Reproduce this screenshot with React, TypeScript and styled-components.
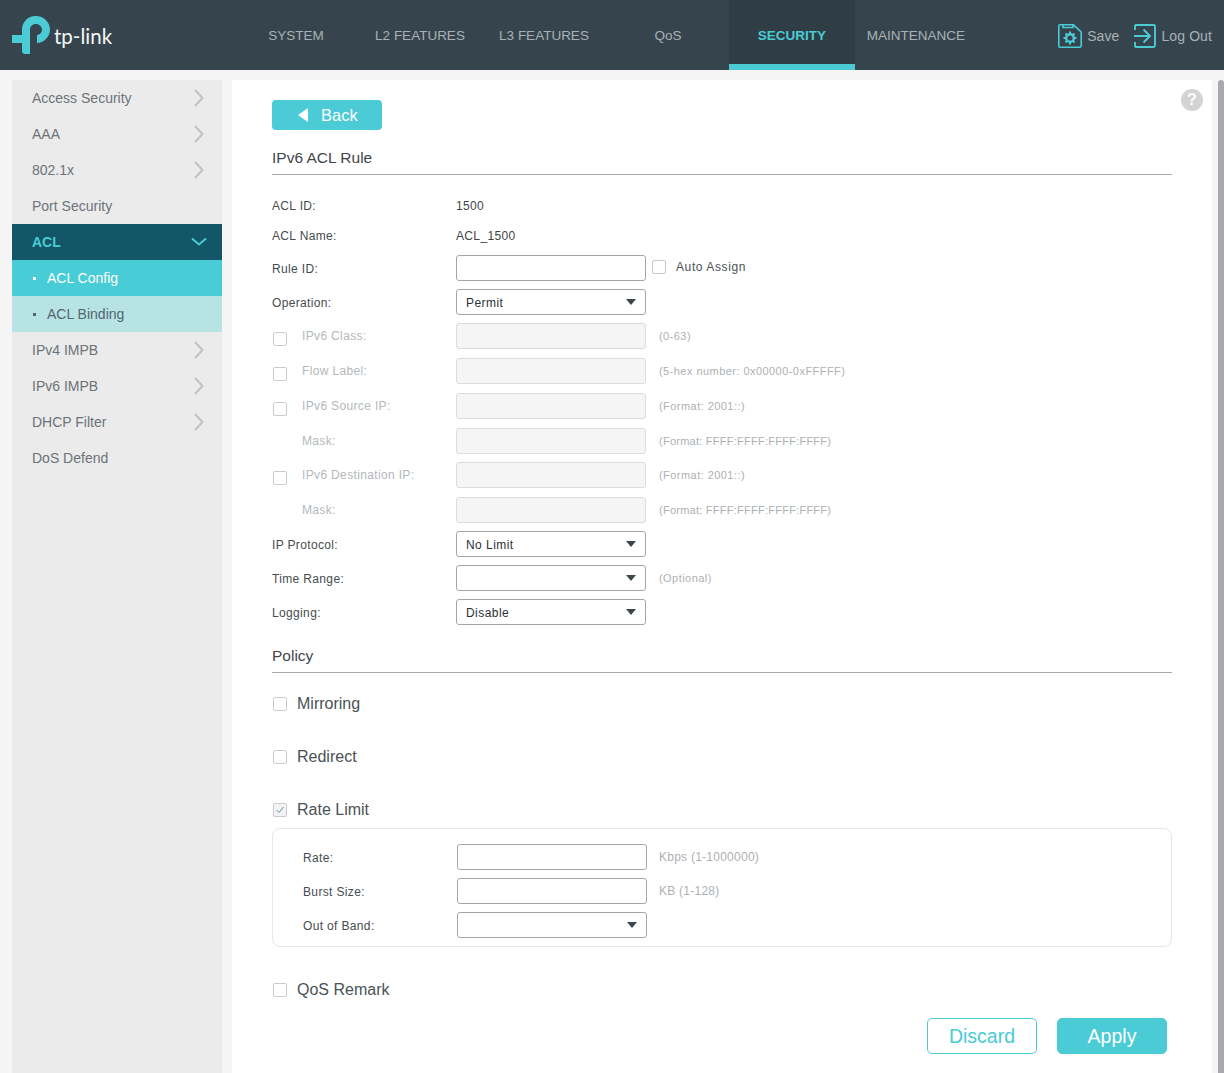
import React from "react";
import styled, { createGlobalStyle } from "styled-components";

const CYAN = "#4acbd6";

const GlobalStyle = createGlobalStyle`
  html, body {
    margin: 0;
    padding: 0;
    height: 1073px;
    overflow: hidden;
    background: #f5f5f5;
    font-family: "Liberation Sans", Arial, sans-serif;
  }
`;

const Page = styled.div`
  width: 1224px;
  height: 1073px;
  display: flex;
  flex-direction: column;
  overflow: hidden;
`;

const TopBar = styled.header`
  height: 70px;
  flex: none;
  background: #36454d;
  display: flex;
  align-items: stretch;
`;

const LogoBox = styled.div`
  width: 234px;
  flex: none;
  padding: 16px 0 0 12px;
  display: flex;
  align-items: flex-start;
  box-sizing: border-box;
`;

const LogoText = styled.span`
  font-family: "Lato", sans-serif;
  font-size: 20.5px;
  font-weight: 400;
  color: #f4f6f6;
  margin: 7px 0 0 4px;
  line-height: 26px;
`;

const NavItem = styled.div<{ $active?: boolean }>`
  width: ${(p) => (p.$active ? 126 : 124)}px;
  margin: ${(p) => (p.$active ? "0 -1px" : "0")};
  flex: none;
  box-sizing: border-box;
  display: flex;
  align-items: center;
  justify-content: center;
  font-size: 13.5px;
  color: ${(p) => (p.$active ? CYAN : "#a8b1b5")};
  font-weight: ${(p) => (p.$active ? 700 : 400)};
  background: ${(p) => (p.$active ? "#2f3e44" : "transparent")};
  box-shadow: ${(p) => (p.$active ? `inset 0 -6px 0 ${CYAN}` : "none")};
`;

const TopActions = styled.div`
  margin-left: auto;
  padding: 24px 12px 0 0;
  display: flex;
  align-items: flex-start;
`;

const TopAction = styled.span<{ $gap: number }>`
  color: #a8b1b5;
  font-size: 14px;
  letter-spacing: 0.1px;
  line-height: 24px;
  margin-left: 5px;
  margin-right: ${(p) => p.$gap}px;
`;

const Body = styled.div`
  flex: 1;
  display: flex;
  padding: 10px 0 0 12px;
  min-height: 0;
`;

const Sidebar = styled.nav`
  width: 210px;
  flex: none;
  background: #ebebeb;
  margin-right: 10px;
`;

const MenuRow = styled.div<{ $kind?: "open" | "current" | "sub" }>`
  height: 36px;
  box-sizing: border-box;
  display: flex;
  align-items: center;
  padding: 0 15px 0 20px;
  justify-content: space-between;
  font-size: 14px;
  font-weight: ${(p) => (p.$kind === "open" ? 700 : 400)};
  color: ${(p) =>
    p.$kind === "open" ? CYAN : p.$kind === "current" ? "#fff" : p.$kind === "sub" ? "#51666e" : "#6c7378"};
  background: ${(p) =>
    p.$kind === "open"
      ? "#125668"
      : p.$kind === "current"
        ? "#48ccd6"
        : p.$kind === "sub"
          ? "#b8e3e5"
          : "transparent"};
`;

const SubLabel = styled.span`
  display: flex;
  align-items: center;
`;

const Bullet = styled.i`
  width: 3px;
  height: 3px;
  margin: 0 11px 0 1px;
  background: currentColor;
`;

const Content = styled.main`
  width: 980px;
  flex: none;
  position: relative;
  background: #fff;
  box-sizing: border-box;
  padding: 20px 40px 0;
`;

const HelpBadge = styled.div`
  position: absolute;
  top: 9px;
  right: 9px;
  width: 22px;
  height: 22px;
  border-radius: 50%;
  background: #d3d3d3;
  color: #fff;
  font-weight: 700;
  font-size: 16px;
  line-height: 22px;
  text-align: center;
`;

const Scrollbar = styled.div`
  width: 6px;
  margin-left: 6px;
  flex: none;
  background: #a9a9ad;
  border-radius: 3px 3px 0 0;
`;

const BackButton = styled.div`
  width: 110px;
  height: 30px;
  border-radius: 4px;
  background: ${CYAN};
  color: #fff;
  font-size: 16.5px;
  display: flex;
  align-items: center;
  padding: 1px 0 0 26px;
  box-sizing: border-box;
`;

const BackArrow = styled.i`
  width: 0;
  height: 0;
  border-style: solid;
  border-width: 7px 10px 7px 0;
  border-color: transparent #fff transparent transparent;
  margin: -1px 13px 0 0;
`;

const SectionTitle = styled.h2<{ $top: number; $bottom: number }>`
  margin: ${(p) => p.$top}px 0 ${(p) => p.$bottom}px;
  height: 33px;
  box-sizing: border-box;
  border-bottom: 1px solid #a6a9ab;
  font-size: 15.5px;
  font-weight: 400;
  line-height: 32px;
  color: #3f474b;
`;

const Row = styled.div<{ $h: number; $mt?: number; $mb?: number }>`
  height: ${(p) => p.$h}px;
  margin-top: ${(p) => p.$mt ?? 0}px;
  margin-bottom: ${(p) => p.$mb ?? 0}px;
  display: flex;
  align-items: center;
`;

const Label = styled.label<{ $w?: number; $muted?: boolean; $pad?: number }>`
  width: ${(p) => p.$w ?? 184}px;
  padding-left: ${(p) => p.$pad ?? 0}px;
  padding-top: ${(p) => (p.$muted ? 0 : 2)}px;
  box-sizing: border-box;
  flex: none;
  font-size: 12px;
  letter-spacing: 0.35px;
  display: flex;
  align-items: center;
  color: ${(p) => (p.$muted ? "#b4b8ba" : "#454c50")};
`;

const Value = styled.span`
  font-size: 12px;
  letter-spacing: 0.35px;
  padding-top: 2px;
  color: #3f4649;
`;

const Input = styled.div<{ $disabled?: boolean }>`
  width: 190px;
  height: 26px;
  flex: none;
  box-sizing: border-box;
  border-radius: 3px;
  border: 1px solid ${(p) => (p.$disabled ? "#dcdcdc" : "#a3a6a8")};
  background: ${(p) => (p.$disabled ? "#f5f5f5" : "#fff")};
`;

const Select = styled(Input)`
  position: relative;
  padding-left: 9px;
  font-size: 12px;
  letter-spacing: 0.45px;
  line-height: 26px;
  color: #2b3135;

  &::after {
    content: "";
    position: absolute;
    right: 9px;
    top: 9px;
    border-style: solid;
    border-width: 6px 5px 0;
    border-color: #3c464c transparent transparent;
  }
`;

const Hint = styled.span<{ $spacing?: number }>`
  margin-left: 13px;
  font-size: 11px;
  letter-spacing: ${(p) => p.$spacing ?? 0.45}px;
  color: #adb1b3;
`;

const PanelHint = styled.span`
  margin-left: 12px;
  font-size: 12px;
  letter-spacing: 0.25px;
  color: #adb1b3;
`;

const Box = styled.i<{ $checked?: boolean; $mr?: number; $ml?: number; $mt?: number }>`
  width: 14px;
  height: 14px;
  flex: none;
  box-sizing: border-box;
  border: 1px solid #c9cbcc;
  border-radius: 2px;
  margin: ${(p) => p.$mt ?? 0}px ${(p) => p.$mr ?? 0}px 0 ${(p) => p.$ml ?? 0}px;
  display: flex;
  align-items: center;
  justify-content: center;
  background: ${(p) => (p.$checked ? "#f3f3f3" : "#fff")};
`;

const PolicyLabel = styled.span`
  font-size: 16px;
  color: #4a5256;
`;

const AutoAssign = styled.span`
  display: flex;
  align-items: center;
  margin: -3px 0 0 6px;
  font-size: 12px;
  letter-spacing: 0.6px;
  color: #4a5256;
`;

const RatePanel = styled.div`
  margin-top: 2px;
  height: 119px;
  box-sizing: border-box;
  border: 1px solid #e6e6e6;
  border-radius: 8px;
  padding: 15px 0 0 30px;
`;

const Footer = styled.div`
  display: flex;
  justify-content: flex-end;
  gap: 20px;
  padding-right: 5px;
  margin-top: 12px;
`;

const ActionButton = styled.div<{ $primary?: boolean }>`
  width: 110px;
  height: 36px;
  box-sizing: border-box;
  border-radius: 5px;
  border: 1px solid ${CYAN};
  background: ${(p) => (p.$primary ? CYAN : "#fff")};
  color: ${(p) => (p.$primary ? "#fff" : CYAN)};
  font-size: 19.5px;
  line-height: 34px;
  text-align: center;
`;

const LogoMark = () => (
  <svg width="38" height="38" viewBox="0 0 38 38">
    <path
      fill={CYAN}
      d="M10 19V13.5C10 6 16 0 23.5 0H24C31.5 0 38 6 38 13.5C38 21 31.5 27 25 27V19C27.5 19 30 16.5 30 13.5C30 10.5 27 8 24 8H23.5C20.5 8 18 10.5 18 13.5V38H13C11 38 10 36.5 10 35V27H0V19Z"
    />
  </svg>
);

const Chevron = ({ open }: { open?: boolean }) => (
  <svg width="16" height="18" viewBox="0 0 16 18" fill="none">
    <path
      d={open ? "M1 5.5L8 11.5L15 5.5" : "M4 1L11.5 9L4 17"}
      stroke={open ? CYAN : "#bfc1c2"}
      strokeWidth="2"
    />
  </svg>
);

const SaveIcon = () => (
  <svg width="24" height="24" viewBox="0 0 24 24" fill="none" stroke={CYAN}>
    <path strokeWidth="1.6" d="M2 0.8H15.5L23.2 8V22C23.2 22.7 22.7 23.2 22 23.2H2C1.3 23.2 0.8 22.7 0.8 22V2C0.8 1.3 1.3 0.8 2 0.8Z" />
    <path strokeWidth="1.6" d="M5 0.8V3.5H15V0.8" />
    <circle cx="12" cy="14" r="3.8" strokeWidth="2.4" />
    <path
      strokeWidth="2"
      d="M12 7.5V10M12 18V20.5M5.5 14H8M16 14H18.5M7.5 9.5L9.2 11.2M14.8 16.8L16.5 18.5M16.5 9.5L14.8 11.2M9.2 16.8L7.500 18.5"
    />
  </svg>
);

const LogoutIcon = () => (
  <svg width="22" height="24" viewBox="0 0 22 24" fill="none" stroke={CYAN} strokeWidth="1.9">
    <path d="M1 6V2C1 1.4 1.4 1 2 1H19.5C20.4 1 21 1.6 21 2.5V21.5C21 22.4 20.4 23 19.5 23H2C1.4 23 1 22.6 1 22V18" />
    <path d="M0 12H15.5M9.5 5.500L16 12L9.5 18.5" />
  </svg>
);

const CheckMark = () => (
  <svg width="10" height="10" viewBox="0 0 10 10" fill="none">
    <path d="M1.5 5L4 7.5L8.5 2" stroke="#5a9aa0" strokeWidth="1" />
  </svg>
);

const sideTop = ["Access Security", "AAA", "802.1x"];
const navItems = ["SYSTEM", "L2 FEATURES", "L3 FEATURES", "QoS", "SECURITY", "MAINTENANCE"];

const DisabledRow = ({
  label,
  hint,
  checkbox,
  mb,
  spacing,
}: {
  label: string;
  hint: string;
  checkbox?: boolean;
  mb: number;
  spacing?: number;
}) => (
  <Row $h={26} $mb={mb}>
    <Label $muted $pad={checkbox ? 0 : 30}>
      {checkbox && <Box $ml={1} $mr={15} $mt={6} />}
      {label}
    </Label>
    <Input $disabled />
    <Hint $spacing={spacing}>{hint}</Hint>
  </Row>
);

export default function App() {
  return (
    <Page>
      <GlobalStyle />
      <TopBar>
        <LogoBox>
          <LogoMark />
          <LogoText>tp-link</LogoText>
        </LogoBox>
        {navItems.map((item) => (
          <NavItem key={item} $active={item === "SECURITY"}>
            {item}
          </NavItem>
        ))}
        <TopActions>
          <SaveIcon />
          <TopAction $gap={15}>Save</TopAction>
          <LogoutIcon />
          <TopAction $gap={0}>Log Out</TopAction>
        </TopActions>
      </TopBar>
      <Body>
        <Sidebar>
          {sideTop.map((item) => (
            <MenuRow key={item}>
              {item}
              <Chevron />
            </MenuRow>
          ))}
          <MenuRow>Port Security</MenuRow>
          <MenuRow $kind="open">
            ACL
            <Chevron open />
          </MenuRow>
          <MenuRow $kind="current">
            <SubLabel>
              <Bullet />
              ACL Config
            </SubLabel>
          </MenuRow>
          <MenuRow $kind="sub">
            <SubLabel>
              <Bullet />
              ACL Binding
            </SubLabel>
          </MenuRow>
          {["IPv4 IMPB", "IPv6 IMPB", "DHCP Filter"].map((item) => (
            <MenuRow key={item}>
              {item}
              <Chevron />
            </MenuRow>
          ))}
          <MenuRow>DoS Defend</MenuRow>
        </Sidebar>
        <Content>
          <HelpBadge>?</HelpBadge>
          <BackButton>
            <BackArrow />
            Back
          </BackButton>
          <SectionTitle $top={12} $bottom={16}>
            IPv6 ACL Rule
          </SectionTitle>
          <Row $h={28} $mb={2}>
            <Label>ACL ID:</Label>
            <Value>1500</Value>
          </Row>
          <Row $h={28} $mb={6}>
            <Label>ACL Name:</Label>
            <Value>ACL_1500</Value>
          </Row>
          <Row $h={26} $mb={8}>
            <Label>Rule ID:</Label>
            <Input />
            <AutoAssign>
              <Box $mr={10} />
              Auto Assign
            </AutoAssign>
          </Row>
          <Row $h={26} $mb={8}>
            <Label>Operation:</Label>
            <Select>Permit</Select>
          </Row>
          <DisabledRow checkbox label="IPv6 Class:" hint="(0-63)" mb={9} />
          <DisabledRow checkbox label="Flow Label:" hint="(5-hex number: 0x00000-0xFFFFF)" mb={9} />
          <DisabledRow checkbox label="IPv6 Source IP:" hint="(Format: 2001::)" mb={9} />
          <DisabledRow label="Mask:" hint="(Format: FFFF:FFFF:FFFF:FFFF)" mb={8} spacing={0.25} />
          <DisabledRow checkbox label="IPv6 Destination IP:" hint="(Format: 2001::)" mb={9} />
          <DisabledRow label="Mask:" hint="(Format: FFFF:FFFF:FFFF:FFFF)" mb={8} spacing={0.25} />
          <Row $h={26} $mb={8}>
            <Label>IP Protocol:</Label>
            <Select>No Limit</Select>
          </Row>
          <Row $h={26} $mb={8}>
            <Label>Time Range:</Label>
            <Select />
            <Hint>(Optional)</Hint>
          </Row>
          <Row $h={26}>
            <Label>Logging:</Label>
            <Select>Disable</Select>
          </Row>
          <SectionTitle $top={15} $bottom={15}>
            Policy
          </SectionTitle>
          <Row $h={32} $mb={21}>
            <Box $ml={1} $mr={10} />
            <PolicyLabel>Mirroring</PolicyLabel>
          </Row>
          <Row $h={32} $mb={21}>
            <Box $ml={1} $mr={10} />
            <PolicyLabel>Redirect</PolicyLabel>
          </Row>
          <Row $h={32}>
            <Box $checked $ml={1} $mr={10}>
              <CheckMark />
            </Box>
            <PolicyLabel>Rate Limit</PolicyLabel>
          </Row>
          <RatePanel>
            <Row $h={26} $mb={8}>
              <Label $w={154}>Rate:</Label>
              <Input />
              <PanelHint>Kbps (1-1000000)</PanelHint>
            </Row>
            <Row $h={26} $mb={8}>
              <Label $w={154}>Burst Size:</Label>
              <Input />
              <PanelHint>KB (1-128)</PanelHint>
            </Row>
            <Row $h={26}>
              <Label $w={154}>Out of Band:</Label>
              <Select />
            </Row>
          </RatePanel>
          <Row $h={32} $mt={27}>
            <Box $ml={1} $mr={10} />
            <PolicyLabel>QoS Remark</PolicyLabel>
          </Row>
          <Footer>
            <ActionButton>Discard</ActionButton>
            <ActionButton $primary>Apply</ActionButton>
          </Footer>
        </Content>
        <Scrollbar />
      </Body>
    </Page>
  );
}
